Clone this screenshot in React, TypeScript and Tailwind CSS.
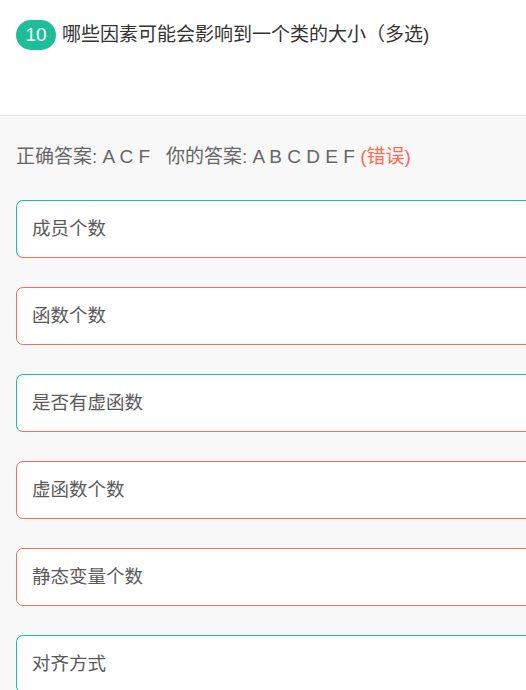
const options = [
  { text: '成员个数', ok: true },
  { text: '函数个数', ok: false },
  { text: '是否有虚函数', ok: true },
  { text: '虚函数个数', ok: false },
  { text: '静态变量个数', ok: false },
  { text: '对齐方式', ok: true },
]

export default function App() {
  return (
    <div
      className="w-[526px] h-[690px] overflow-hidden bg-[#f8f8f8]"
      style={{ fontFamily: '"Liberation Sans", "Noto Sans CJK SC", sans-serif' }}
    >
      <div className="h-[116px] bg-white border-b border-[#ececec] pt-5 px-4 flex items-start gap-[6px]">
        <span className="w-10 h-[30px] rounded-full bg-[#1dbf98] text-white text-[19px] flex items-center justify-center shrink-0">
          10
        </span>
        <span className="text-[19px] leading-[30px] text-[#333]">哪些因素可能会影响到一个类的大小（多选)</span>
      </div>
      <div className="px-4 pt-[28px]">
        <div className="text-[19px] leading-[26px] text-[#666]">
          正确答案: A C F&nbsp;&nbsp;&nbsp;你的答案: A B C D E F <span className="text-[#ff6b4f]">(错误)</span>
        </div>
        <div className="mt-[30px] flex flex-col gap-[29px] w-[540px]">
          {options.map((o) => (
            <div
              key={o.text}
              className={
                o.ok
                  ? 'h-[58px] rounded-[7px] bg-white border border-[#1dbf98] border-b-[#ff6b4f] flex items-center px-[15px]'
                  : 'h-[58px] rounded-[7px] bg-white border border-[#ff6b4f] flex items-center px-[15px]'
              }
            >
              <span className="text-[18.5px] text-[#5a5a5a]">{o.text}</span>
            </div>
          ))}
        </div>
      </div>
    </div>
  )
}
